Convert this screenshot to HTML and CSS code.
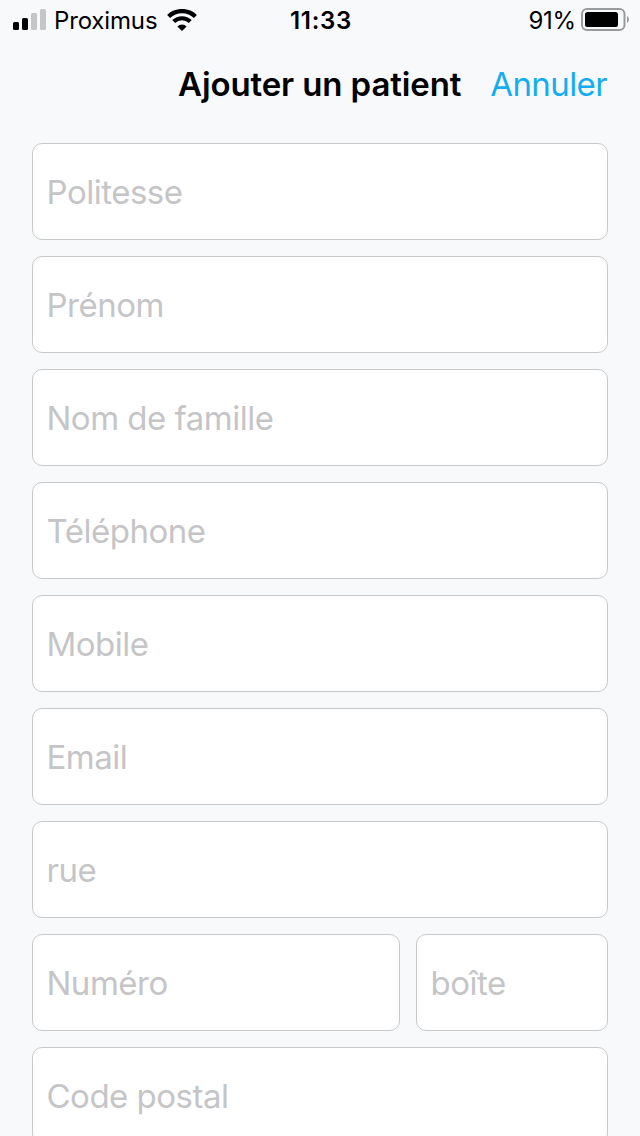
FILE: index.html
```html
<!DOCTYPE html>
<html lang="fr">
<head>
  <meta charset="UTF-8">
  <meta name="viewport" content="width=device-width, initial-scale=1.0">
  <title>Ajouter un patient</title>
  <link rel="stylesheet" href="styles.css">
</head>
<body>
  <div class="status-bar">
    <div class="status-left">
      <svg class="signal" width="34" height="22" viewBox="0 0 34 22">
        <rect x="0" y="13" width="6" height="8" rx="1.5" fill="#000"/>
        <rect x="9" y="9" width="6" height="12" rx="1.5" fill="#000"/>
        <rect x="18" y="4" width="6" height="17" rx="1.5" fill="#c5c6c8"/>
        <rect x="27" y="0" width="6" height="21" rx="1.5" fill="#c5c6c8"/>
      </svg>
      <span class="carrier">Proximus</span>
      <svg class="wifi" width="30" height="22" viewBox="0 0 30 22">
        <path d="M1.6 7.5a19.2 19.2 0 0 1 26.8 0" fill="none" stroke="#000" stroke-width="4.3"/>
        <path d="M6.7 12.6a12 12 0 0 1 16.6 0" fill="none" stroke="#000" stroke-width="4.1"/>
        <path d="M15 22l-4.6-4.6a6.4 6.4 0 0 1 9.2 0z" fill="#000"/>
      </svg>
    </div>
    <span class="time">11:33</span>
    <div class="status-right">
      <span class="percent">91%</span>
      <svg class="battery" width="48" height="24" viewBox="0 0 48 24">
        <rect x="1" y="1" width="42.5" height="21" rx="5" fill="none" stroke="#999a9c" stroke-width="2"/>
        <rect x="4" y="4" width="33" height="15" rx="2.5" fill="#000"/>
        <path d="M46 8c2.6 1.4 2.6 5.6 0 7z" fill="#999a9c"/>
      </svg>
    </div>
  </div>

  <div class="navbar">
    <h1 class="title">Ajouter un patient</h1>
    <a class="cancel" href="#">Annuler</a>
  </div>

  <form class="form">
    <input class="field" type="text" placeholder="Politesse">
    <input class="field" type="text" placeholder="Prénom">
    <input class="field" type="text" placeholder="Nom de famille">
    <input class="field" type="tel" placeholder="Téléphone">
    <input class="field" type="tel" placeholder="Mobile">
    <input class="field" type="email" placeholder="Email">
    <input class="field" type="text" placeholder="rue">
    <div class="row">
      <input class="field number" type="text" placeholder="Numéro">
      <input class="field box" type="text" placeholder="boîte">
    </div>
    <input class="field" type="text" placeholder="Code postal">
  </form>
</body>
</html>
```

FILE: styles.css
```css
* {
  box-sizing: border-box;
}
body {
  margin: 0;
  height: 1136px;
  overflow: hidden;
  background-color: #f8f9fb;
  font-family: Inter, "Liberation Sans", sans-serif;
  color: #000;
}
.status-bar {
  display: grid;
  grid-template-columns: 1fr auto 1fr;
  align-items: center;
  height: 40px;
  padding: 0 11px 0 13px;
  font-size: 24px;
  line-height: 38px;
}
.status-left,
.status-right {
  display: flex;
  align-items: center;
}
.status-right {
  justify-content: flex-end;
}
.carrier {
  padding-top: 2px;
  margin-left: 7px;
  letter-spacing: -0.15px;
}
.wifi {
  margin-left: 10px;
}
.time {
  padding-top: 2px;
  font-weight: 600;
  letter-spacing: 0.7px;
}
.percent {
  padding-top: 2px;
  margin-right: 5px;
  letter-spacing: -0.2px;
}
.navbar {
  display: flex;
  justify-content: flex-end;
  align-items: center;
  height: 88px;
  padding: 0 33px;
}
.title {
  margin: 0;
  font-size: 33px;
  font-weight: 600;
  letter-spacing: -0.12px;
}
.cancel {
  margin-left: 29px;
  font-size: 33px;
  letter-spacing: -0.6px;
  color: #15adf1;
  text-decoration: none;
}
.form {
  display: flex;
  flex-direction: column;
  gap: 16px;
  padding: 15px 32px 0;
}
.row {
  display: flex;
  gap: 16px;
}
.field {
  flex-shrink: 0;
  width: 100%;
  height: 97px;
  padding: 0 13.5px;
  border: 1px solid #c8c9cb;
  border-radius: 10px;
  background-color: #fff;
  font-family: inherit;
  font-size: 33px;
  letter-spacing: -0.5px;
  outline: none;
}
.field::placeholder {
  color: #c5c5c7;
  opacity: 1;
}
.number {
  width: 368px;
}
.box {
  width: 192px;
}
```
